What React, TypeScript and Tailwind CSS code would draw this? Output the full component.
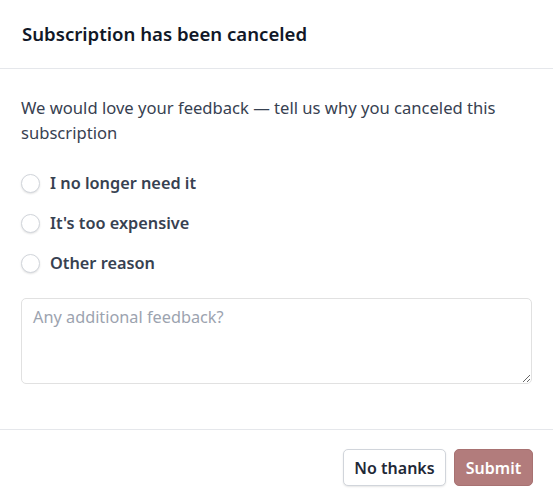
const reasons = ["I no longer need it", "It's too expensive", "Other reason"];

export default function App() {
  return (
    <div
      className="w-[553px] h-[502px] bg-white flex flex-col"
      style={{ fontFamily: '"Noto Sans", "Open Sans", sans-serif' }}
    >
      <div className="h-[69px] px-[22px] flex items-center border-b border-[#e5e7eb]">
        <h1 className="text-[18.6px] font-semibold text-[#111827] leading-6">
          Subscription has been canceled
        </h1>
      </div>

      <div className="px-[21px] pt-[26px] pb-[45px]">
        <p className="text-[16.6px] leading-[25px] text-[#374151]">
          We would love your feedback — tell us why you canceled this subscription
        </p>

        <div className="mt-[26px] flex flex-col gap-4">
          {reasons.map((r) => (
            <label key={r} className="flex items-center gap-[10px] h-6">
              <span className="w-[19px] h-[19px] rounded-full border border-[#d1d5db] bg-white shadow-[0_1px_2px_rgba(0,0,0,0.12)]" />
              <span className="text-[16.3px] font-semibold text-[#374151]">{r}</span>
            </label>
          ))}
        </div>

        <textarea
          className="mt-[23px] block w-full h-[86px] rounded-[5px] border border-[#e1e1e1] px-[11px] py-[6px] text-[16.3px] leading-6 text-[#374151] placeholder:text-[#9ca3af] outline-none"
          placeholder="Any additional feedback?"
        />
      </div>

      <div className="border-t border-[#e5e7eb] flex justify-end gap-2 px-5 pt-[19px]">
        <button className="h-[37px] w-[103px] rounded-[5px] border border-[#d1d5db] bg-white text-[16px] font-semibold text-[#1f2937] shadow-[0_1px_2px_rgba(0,0,0,0.1)]">
          No thanks
        </button>
        <button className="h-[37px] w-[79px] rounded-[5px] border border-[#a87272] bg-[#b27c7c] text-[16px] font-semibold text-white">
          Submit
        </button>
      </div>
    </div>
  );
}
